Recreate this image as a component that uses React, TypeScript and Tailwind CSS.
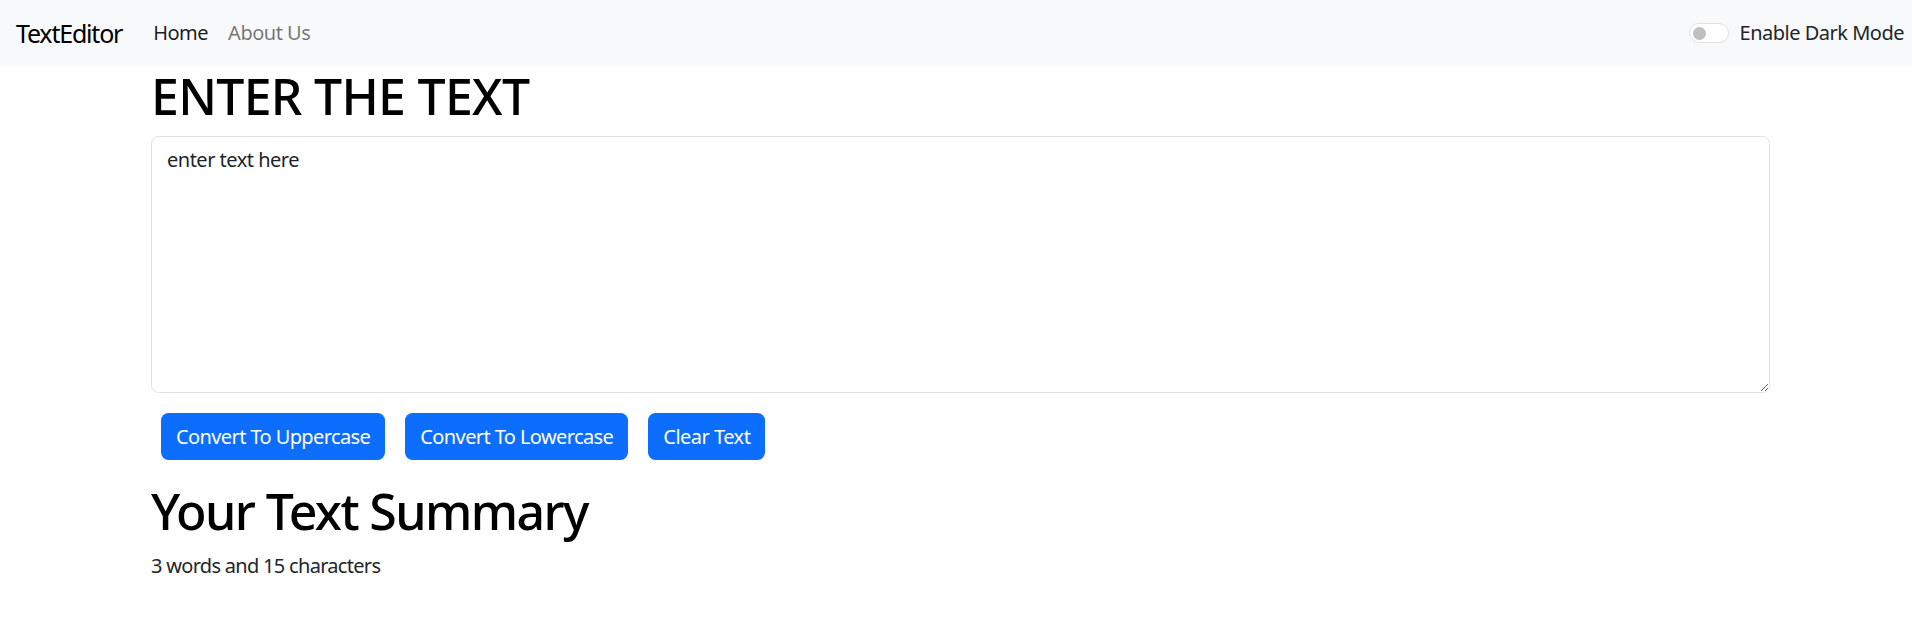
import { useState } from "react";

export default function App() {
  const [text, setText] = useState("enter text here");
  const words = text.split(/\s+/).filter((w) => w.length > 0).length;

  return (
    <div className="min-h-screen bg-white font-['Noto_Sans',sans-serif] text-[#212529]">
      <nav className="h-[66px] bg-[#f8f9fa] flex items-center pl-[16px] pr-[8px]">
        <a href="#" className="text-[25px] leading-[38px] tracking-[-1.2px] text-black mr-[21px]">
          TextEditor
        </a>
        <ul className="flex items-center">
          <li>
            <a href="#" className="block px-[10px] text-[20px] leading-[30px] tracking-[-0.5px] text-black/90">
              Home
            </a>
          </li>
          <li>
            <a href="#" className="block px-[10px] text-[20px] leading-[30px] tracking-[-0.5px] text-black/55">
              About Us
            </a>
          </li>
        </ul>
        <div className="ml-auto flex items-center gap-[11px]">
          <span className="w-[40px] h-[20px] rounded-full border border-[#dee2e6] bg-white flex items-center pl-[3px]">
            <span className="w-[13px] h-[13px] rounded-full bg-[#bfbfbf]" />
          </span>
          <label className="text-[20px] leading-[30px] tracking-[-0.5px]">Enable Dark Mode</label>
        </div>
      </nav>

      <div className="ml-[151px] w-[1619px]">
        <h1 className="mb-[10px] text-[50px] leading-[60px] font-medium tracking-[-0.7px] text-black">
          ENTER THE TEXT
        </h1>
        <textarea
          value={text}
          onChange={(e) => setText(e.target.value)}
          rows={8}
          className="block w-full h-[257px] border border-[#dee2e6] rounded-[7.5px] px-[15px] py-[7.5px] text-[20px] leading-[30px] tracking-[-0.5px] text-[#212529] outline-none"
        />
        <div className="flex gap-[20px] ml-[10px] mt-[20px]">
          <button className="h-[47px] px-[15px] rounded-[7.5px] bg-[#0d6efd] text-white text-[20px] leading-[30px] tracking-[-0.6px]">
            Convert To Uppercase
          </button>
          <button className="h-[47px] px-[15px] rounded-[7.5px] bg-[#0d6efd] text-white text-[20px] leading-[30px] tracking-[-0.6px]">
            Convert To Lowercase
          </button>
          <button className="h-[47px] px-[15px] rounded-[7.5px] bg-[#0d6efd] text-white text-[20px] leading-[30px] tracking-[-0.5px]">
            Clear Text
          </button>
        </div>
        <div className="mt-[21px]">
          <h1 className="mb-[10px] text-[50px] leading-[60px] font-medium tracking-[-1.6px] text-black">
            Your Text Summary
          </h1>
          <p className="text-[20px] leading-[30px] tracking-[-0.7px]">
            {words} words and {text.length} characters
          </p>
        </div>
      </div>
    </div>
  );
}
